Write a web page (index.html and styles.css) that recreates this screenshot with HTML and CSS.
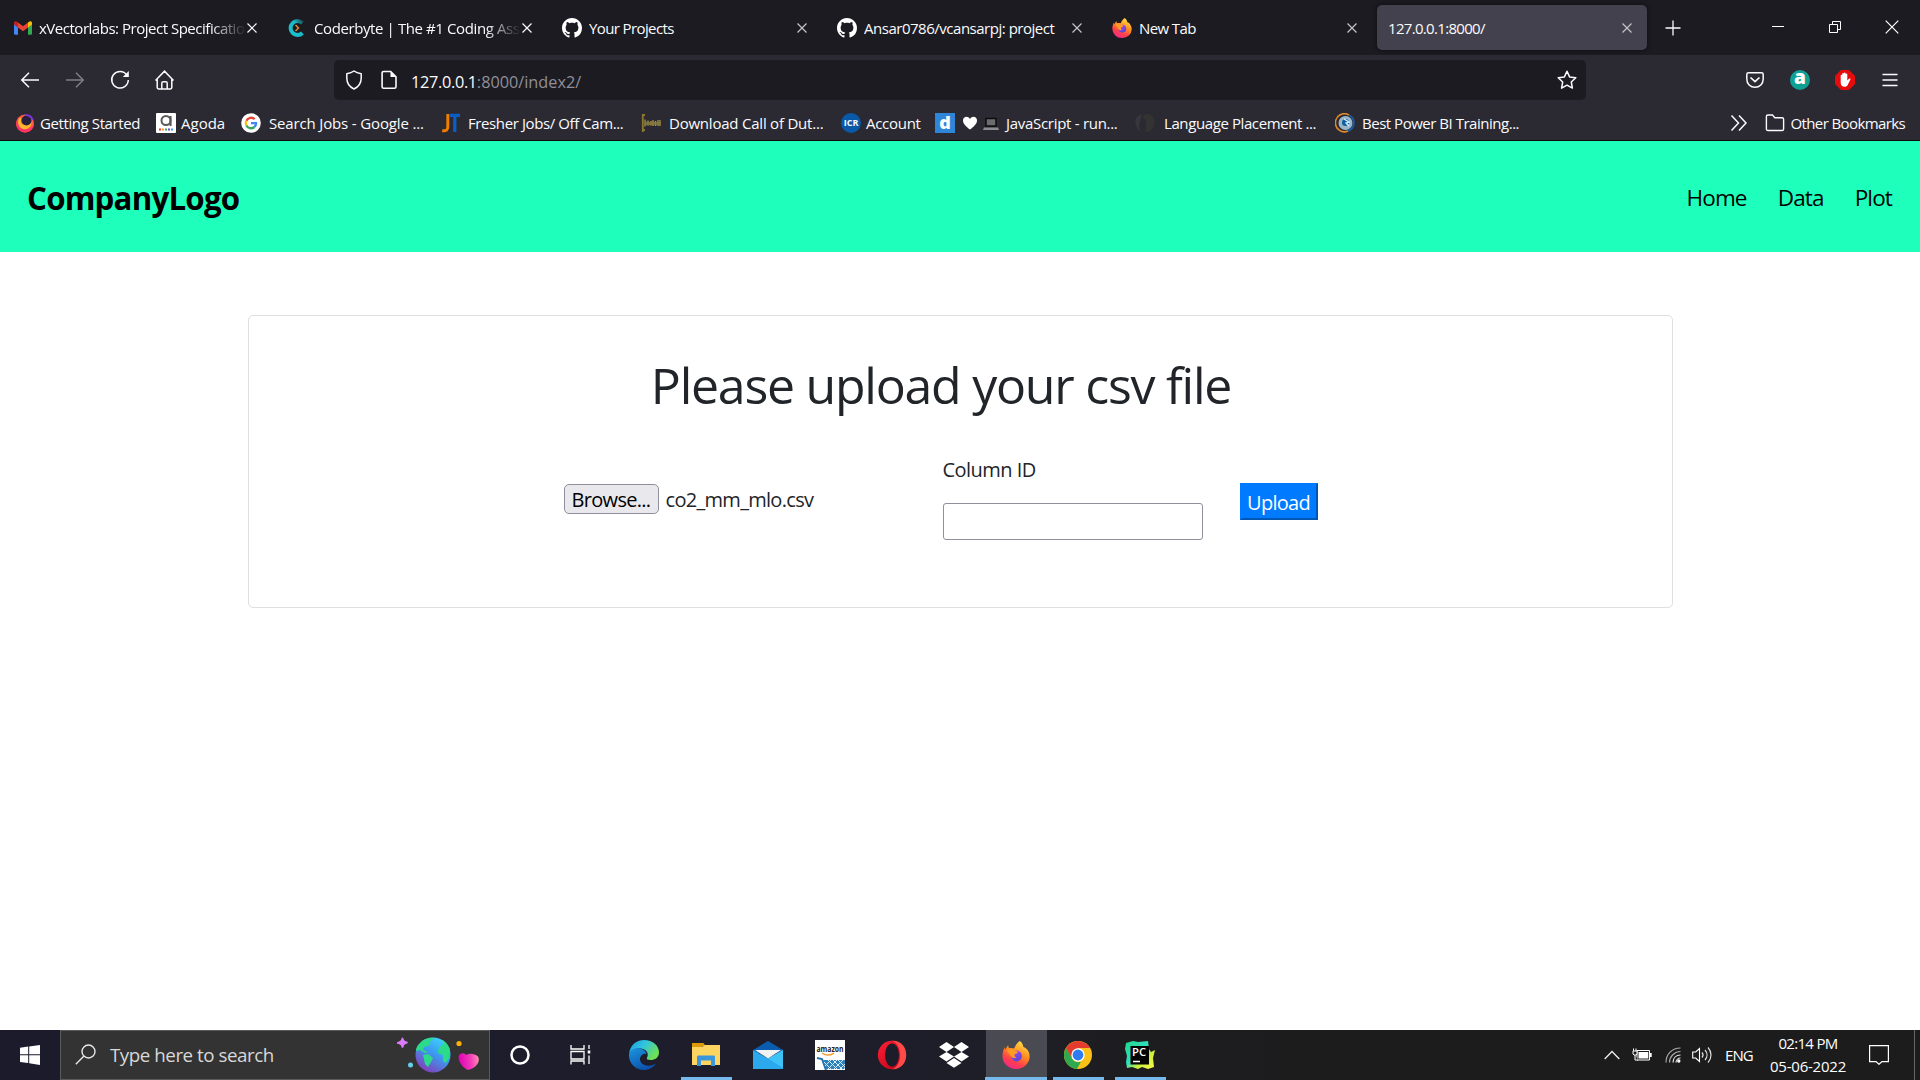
FILE: index.html
```html
<!DOCTYPE html>
<html lang="en">
<head>
<meta charset="utf-8">
<title>Upload CSV</title>
<link rel="stylesheet" href="styles.css">
</head>
<body>
<svg class="defs" width="0" height="0">
  <defs>
    <linearGradient id="fxBody" x1="0.8" y1="0" x2="0.3" y2="1"><stop offset="0" stop-color="#ffe94a"/><stop offset="0.45" stop-color="#ff8a1f"/><stop offset="0.75" stop-color="#ff3d4f"/><stop offset="1" stop-color="#f0288c"/></linearGradient>
    <linearGradient id="fxCore" x1="0" y1="0" x2="0.5" y2="1"><stop offset="0" stop-color="#b04bf0"/><stop offset="1" stop-color="#5b45d8"/></linearGradient>
    <linearGradient id="edgeA" x1="0" y1="0" x2="1" y2="0.5"><stop offset="0" stop-color="#1c9de0"/><stop offset="0.5" stop-color="#2fc4df"/><stop offset="1" stop-color="#6ee053"/></linearGradient>
    <linearGradient id="edgeB" x1="0" y1="0" x2="0.6" y2="1"><stop offset="0" stop-color="#1b96e0"/><stop offset="1" stop-color="#0c4fa8"/></linearGradient>
    <linearGradient id="opera" x1="0" y1="0" x2="1" y2="1"><stop offset="0" stop-color="#ff2038"/><stop offset="1" stop-color="#b50012"/></linearGradient>
    <linearGradient id="globe" x1="0.8" y1="0" x2="0.2" y2="1"><stop offset="0" stop-color="#3fd5ff"/><stop offset="0.45" stop-color="#3a9bf0"/><stop offset="1" stop-color="#8a35b5"/></linearGradient>
    <linearGradient id="heart" x1="0" y1="0.4" x2="1" y2="0.3"><stop offset="0" stop-color="#e000b4"/><stop offset="0.6" stop-color="#f23db8"/><stop offset="1" stop-color="#ff8fb0"/></linearGradient>
    <linearGradient id="pc" x1="0" y1="0" x2="1" y2="1"><stop offset="0" stop-color="#21d789"/><stop offset="0.45" stop-color="#2fe0c0"/><stop offset="0.65" stop-color="#c8f03a"/><stop offset="1" stop-color="#fcf84a"/></linearGradient>
    <linearGradient id="coder" x1="0" y1="1" x2="1" y2="0"><stop offset="0" stop-color="#17c5cf"/><stop offset="0.65" stop-color="#1cb7c2"/><stop offset="1" stop-color="#1b4a52"/></linearGradient>
    <symbol id="x" viewBox="0 0 12 12"><path d="M1.500 1.500l9 9M10.500 1.500l-9 9" fill="none" stroke="currentColor" stroke-width="1.200"/></symbol>
    <symbol id="firefox" viewBox="0 0 28 28">
      <path d="M17.800 0c2.500 1.700 3.300 4 3.600 6 1.800.500 3.200 1.700 3.800 2.600 1.700 2.200 2.400 4.400 2.400 7A13.300 12.400 0 0 1 14 28 13.300 12.600 0 0 1 .5 15.300c0-3.500.800-6.600 2.300-9 .200 1.100.600 1.900 1 2.300C4 7.200 5 5.200 6.200 4.200c0 1.300.300 2.300 1 2.800 1.700-.300 3.700 0 5 .500C13.200 4.800 15.500 1.500 17.800 0z" fill="url(#fxBody)"/>
      <circle cx="14.500" cy="15" r="5.400" fill="url(#fxCore)"/>
      <path d="M4.500 9.500c3-2 6.500-1.600 8.700.4 1.300 0 2.700.500 2.800 1.300-.500 1.300-3 1.300-3.500 2.600-.300 1.300.600 2.400 1.800 2.700-2.600 1.400-5.300 0-6-2.400z" fill="#ff9a22"/>
    </symbol>
    <symbol id="github" viewBox="0 0 16 16"><path fill="#fff" d="M8 0C3.580 0 0 3.580 0 8c0 3.540 2.290 6.530 5.470 7.590.4.070.550-.170.550-.380 0-.190-.010-.820-.010-1.490-2.010.370-2.530-.490-2.690-.940-.090-.230-.480-.940-.820-1.130-.280-.150-.680-.520-.010-.530.630-.010 1.080.580 1.230.820.720 1.210 1.870.870 2.330.660.070-.520.280-.870.510-1.070-1.780-.2-3.640-.890-3.640-3.950 0-.870.310-1.590.820-2.150-.080-.2-.360-1.020.080-2.120 0 0 .670-.210 2.200.820.640-.180 1.320-.270 2-.270s1.360.090 2 .270c1.530-1.040 2.200-.820 2.200-.820.440 1.100.160 1.920.080 2.120.510.560.820 1.270.820 2.150 0 3.070-1.870 3.750-3.650 3.950.290.250.540.730.540 1.480 0 1.070-.010 1.930-.010 2.200 0 .210.150.460.550.380A8.010 8.010 0 0 0 16 8c0-4.420-3.580-8-8-8z"/></symbol>
  </defs>
</svg>

<div class="tabstrip">
  <div class="tab">
    <svg class="favicon gmail" viewBox="0 0 20 20"><path d="M1 5v10.500c0 .800.500 1.200 1.200 1.200H5V8z" fill="#4285f4"/><path d="M15 8v8.700h2.800c.700 0 1.200-.400 1.200-1.200V5z" fill="#34a853"/><path d="M5 4.500V9.500l5 3.800 5-3.800V4.500l-5 3.800z" fill="#ea4335"/><path d="M1 5c0-1.800 1.800-2.300 3-1.300l1 .800v5L1 6.600z" fill="#c5221f"/><path d="M19 5c0-1.800-1.800-2.300-3-1.300l-1 .800v5l4-2.900z" fill="#fbbc04"/></svg>
    <span class="tab-title fade tight-5">xVectorlabs: Project Specification</span>
    <svg class="close"><use href="#x"/></svg>
  </div>
  <div class="tab">
    <svg class="favicon" viewBox="0 0 20 20"><path d="M15.500 5A7 7 0 1 0 15.500 15" fill="none" stroke="url(#coder)" stroke-width="4"/><path d="M8.500 7l3 3-3 3" fill="none" stroke="#d98b2b" stroke-width="1.500"/></svg>
    <span class="tab-title fade tight-4">Coderbyte | The #1 Coding Assessment</span>
    <svg class="close"><use href="#x"/></svg>
  </div>
  <div class="tab">
    <svg class="favicon"><use href="#github"/></svg>
    <span class="tab-title tight-6">Your Projects</span>
    <svg class="close dim"><use href="#x"/></svg>
  </div>
  <div class="tab">
    <svg class="favicon"><use href="#github"/></svg>
    <span class="tab-title tight-5">Ansar0786/vcansarpj: project</span>
    <svg class="close dim"><use href="#x"/></svg>
  </div>
  <div class="tab">
    <svg class="favicon"><use href="#firefox"/></svg>
    <span class="tab-title tight-6">New Tab</span>
    <svg class="close dim"><use href="#x"/></svg>
  </div>
  <div class="tab active">
    <span class="tab-title tight-7">127.0.0.1:8000/</span>
    <svg class="close dim"><use href="#x"/></svg>
  </div>
  <svg class="newtab" viewBox="0 0 16 16"><path d="M8 .5v15M.5 8h15" stroke="#fbfbfe" stroke-width="1.300"/></svg>
  <div class="window-controls">
    <svg viewBox="0 0 14 14"><path d="M1 6.500h12" stroke="#fff" stroke-width="1"/></svg>
    <svg viewBox="0 0 14 14"><path d="M1.500 4.500h8v8h-8zM4.500 4.500v-3h8v8h-3" fill="none" stroke="#fff"/></svg>
    <svg viewBox="0 0 14 14"><path d="M.7.700l12.600 12.600M13.300.7L.7 13.300" stroke="#fff" stroke-width="1.200"/></svg>
  </div>
</div>

<div class="navbar">
  <div class="nav-buttons">
    <svg viewBox="0 0 20 20"><path d="M19 10H2M9 2.800L1.800 10 9 17.200" fill="none" stroke="#fbfbfe" stroke-width="1.500"/></svg>
    <svg class="disabled" viewBox="0 0 20 20"><path d="M1 10h17M11 2.800l7.200 7.200-7.200 7.200" fill="none" stroke="#fbfbfe" stroke-width="1.500"/></svg>
    <svg viewBox="0 0 20 20"><path d="M16.800 5A8.300 8.300 0 1 0 18.300 10" fill="none" stroke="#fbfbfe" stroke-width="1.500"/><path d="M18.800 1v6h-6z" fill="#fbfbfe"/></svg>
    <svg viewBox="0 0 20 20"><path d="M.5 10.500L9.500 1.200l9 9.300M2.200 9v8.500c0 .900.500 1.400 1.400 1.400h11.800c.900 0 1.400-.500 1.400-1.400V9M6.800 18.500v-5.200c0-1 .500-1.600 1.500-1.600h2.400c1 0 1.500.600 1.500 1.600v5.200" fill="none" stroke="#fbfbfe" stroke-width="1.500"/></svg>
  </div>
  <div class="urlbar">
    <svg viewBox="0 0 20 20"><path d="M10 1C8 2.500 5 3.400 2.800 3.800V8c0 5 2.900 9 7.200 11 4.300-2 7.200-6 7.200-11V3.800C15 3.400 12 2.500 10 1z" fill="none" stroke="#fbfbfe" stroke-width="1.500" stroke-linejoin="round"/></svg>
    <svg class="page" viewBox="0 0 20 20"><path d="M4.700 1.500h7l5.300 5.300v9.900c0 1-.6 1.600-1.600 1.600H4.700c-1 0-1.600-.600-1.600-1.600V3.100c0-1 .600-1.600 1.600-1.600z" fill="none" stroke="#fbfbfe" stroke-width="1.600"/><path d="M11.500 1.500v5.500H17z" fill="#fbfbfe"/></svg>
    <span class="url"><span class="host">127.0.0.1</span>:8000/index2/</span>
    <svg class="star" viewBox="0 0 20 20"><path d="M10 1.300l2.600 5.600 6.200.800-4.500 4.300 1.100 6.100L10 15.200l-5.400 2.900L5.700 12 1.200 7.700l6.200-.800z" fill="none" stroke="#fbfbfe" stroke-width="1.500" stroke-linejoin="round"/></svg>
  </div>
  <div class="nav-tools">
    <svg viewBox="0 0 20 20"><path d="M3.500 2.700h13c1 0 1.700.700 1.700 1.700V9c0 4.900-3.600 8.300-8.200 8.300S1.800 13.900 1.800 9V4.400c0-1 .7-1.700 1.700-1.700z" fill="none" stroke="#fbfbfe" stroke-width="1.500"/><path d="M5.500 7.500L10 11.700l4.500-4.200" fill="none" stroke="#fbfbfe" stroke-width="1.700"/></svg>
    <span class="badge-a">a</span>
    <svg viewBox="0 0 20 20"><path d="M6 0h8l6 6v8l-6 6H6l-6-6V6z" fill="#e60c0c"/><path d="M5.700 11V5.600c0-1 1.500-1 1.500 0v3-4.900c0-1.100 1.700-1.100 1.700 0V3.200c0-1.100 1.700-1.100 1.700 0v1c0-1.100 1.700-1.100 1.700 0v6.300l1.700-1.800c.800-.700 1.900 0 1.400.900l-2.700 5.400c-.600 1.200-1.500 1.800-2.900 1.800-2.700 0-4.100-1.800-4.100-4.400z" fill="#fff"/></svg>
    <svg viewBox="0 0 20 20"><path d="M2.500 4.500h15M2.500 10h15M2.500 15.500h15" stroke="#fbfbfe" stroke-width="1.500"/></svg>
  </div>
</div>

<div class="bookmarks">
  <div class="bm b1"><svg viewBox="0 0 20 20"><circle cx="10" cy="10.500" r="9" fill="#ff5b45"/><path d="M1 9c0 6 4 10.500 9 10.500s9-4 9-9c-1 3-4 5.500-8 5.500S3 13 4 6z" fill="#ff3366"/><path d="M5 4.500c-3 3-2.500 8 1 10.500 4 2.500 8.500.8 10-3 .8-2 .500-4-.5-5.500 0 3-2 5.500-5 5.500-3.500 0-5.500-3-4-6z" fill="#ffb62e"/><circle cx="11.500" cy="7.500" r="5" fill="#28203c"/><path d="M9 1.500c5-1.500 10 2 10 8-1-2.500-3-5-6-6z" fill="#7b35e8"/></svg><span class="tight-4">Getting Started</span></div>
  <div class="bm b2"><svg viewBox="0 0 20 20"><rect width="20" height="20" rx="1" fill="#fff"/><circle cx="10" cy="7.500" r="4.500" fill="none" stroke="#5a5a5a" stroke-width="2"/><path d="M14.600 3v10" stroke="#5a5a5a" stroke-width="2"/><g stroke-width="1.800"><path d="M3 16.500h2" stroke="#e33"/><path d="M6 16.500h2" stroke="#f7a01b"/><path d="M9 16.500h2" stroke="#3aa757"/><path d="M12 16.500h2" stroke="#7b44c9"/><path d="M15 16.500h2" stroke="#3a9be8"/></g></svg><span>Agoda</span></div>
  <div class="bm b3"><svg viewBox="0 0 20 20"><circle cx="10" cy="10" r="9.800" fill="#fff"/><g fill="none" stroke-width="2.300"><path d="M13.700 6.200A5.200 5.200 0 0 0 5.400 7.700" stroke="#ea4335"/><path d="M5.400 7.700a5.200 5.200 0 0 0 0 4.700" stroke="#fbbc05"/><path d="M5.400 12.400a5.200 5.200 0 0 0 8 1.600" stroke="#34a853"/><path d="M13.400 14A5 5 0 0 0 15.100 10.200H10" stroke="#4285f4"/></g></svg><span class="tight-1">Search Jobs - Google ...</span></div>
  <div class="bm b4"><svg viewBox="0 0 20 20"><path d="M6.800 1v12.500c0 3.500-1.500 4.700-5.600 4.200" fill="none" stroke="#f07c00" stroke-width="3"/><path d="M8.500 2.300H19M13.800 2v17" stroke="#0a5fc4" stroke-width="3.200"/></svg><span class="tight-4">Fresher Jobs/ Off Cam...</span></div>
  <div class="bm b5"><svg viewBox="0 0 20 20"><path d="M1.800 1v18M1 2h3M1 17h3" stroke="#8c7a2c" stroke-width="1.800"/><path d="M4 6.500v7M7 7.500v5M10 8v4.500M12 7v6M14.500 8v5M17 7v6M19 7v6" stroke="#b09a4c" stroke-width="1.200"/><path d="M4 10.500h15.500" stroke="#8a7a3c" stroke-width="3.500" opacity=".8"/></svg><span class="tight-2">Download Call of Dut...</span></div>
  <div class="bm b6"><i class="icr">ICR</i><span class="tight-3">Account</span></div>
  <div class="bm b7"><i class="dee">d</i><svg class="mini" viewBox="0 0 16 16"><path d="M8 14.500C4 11.500 1 8.800 1 5.500 1 1.500 6 .5 8 4c2-3.500 7-2.500 7 1.500 0 3.300-3 6-7 9z" fill="#fff"/></svg><svg class="laptop" viewBox="0 0 18 16"><path d="M4 3.500h10v7.500H4z" fill="#6c6c70" stroke="#0c0c0e" stroke-width="1.500"/><path d="M2 12.500h14l1 2.500H1z" fill="#8c8c90"/></svg><span class="tight-3">JavaScript - run...</span></div>
  <div class="bm b8"><svg viewBox="0 0 20 20"><path d="M7 1C2 2 0 6 .5 10.500 1 14 3 17 5 18c-1-4-1-7 .5-11z" fill="#36363c"/><path d="M9 2c6-3 11 2 10.500 8.500C19 16 15 19.500 10 19c2-5 0-9 1-12C8 6 7 4 9 2z" fill="#333331"/></svg><span class="tight-4">Language Placement ...</span></div>
  <div class="bm b9"><svg viewBox="0 0 20 20"><circle cx="10.500" cy="10" r="7" fill="#9bb6c8"/><path d="M14 2A9 9 0 1 0 13 18" fill="none" stroke="#e08a28" stroke-width="1.600"/><path d="M14 2c7 4 6 13-1 16" fill="none" stroke="#1d5b9c" stroke-width="2"/><circle cx="10.500" cy="9.500" r="3.500" fill="#0e5f9e"/><path d="M9 6l5 3-3 1 3 3" fill="none" stroke="#dff3ff" stroke-width="1.300"/></svg><span class="tight-5">Best Power BI Training...</span></div>
  <svg class="more" viewBox="0 0 20 20"><path d="M2.500 2.500L9.500 10l-7 7.500M10 2.500l7 7.500-7 7.500" fill="none" stroke="#fbfbfe" stroke-width="1.500"/></svg>
  <div class="bm other"><svg viewBox="0 0 20 20"><path d="M3 2h4.500l2.300 2.700H17c1 0 1.600.6 1.600 1.600v9.600c0 1-.6 1.600-1.600 1.600H3c-1 0-1.600-.6-1.600-1.600V3.600C1.400 2.600 2 2 3 2z" fill="none" stroke="#fbfbfe" stroke-width="1.400"/></svg><span class="tight-6">Other Bookmarks</span></div>
</div>

<main class="page-body">
  <header class="site-header">
    <div class="logo">CompanyLogo</div>
    <nav><a>Home</a><a>Data</a><a>Plot</a></nav>
  </header>
  <section class="card">
    <h1>Please upload your csv file</h1>
    <form class="upload-form">
      <div class="file-input"><span class="browse">Browse...</span><span class="filename">co2_mm_mlo.csv</span></div>
      <label class="column-id"><span>Column ID</span><input type="text"></label>
      <button type="button" class="upload">Upload</button>
    </form>
  </section>
</main>

<footer class="taskbar">
  <div class="start"><svg viewBox="0 0 20 20"><path d="M0 2.800l8.200-1.200v7.700H0zM9.200 1.500L20 0v9.300H9.200zM0 10.300h8.200V18L0 16.900zM9.200 10.300H20V20L9.200 18.200z" fill="#fff"/></svg></div>
  <div class="search">
    <svg class="lens" viewBox="0 0 21 21"><circle cx="13.500" cy="7.500" r="6.500" fill="none" stroke="#e8e8e8" stroke-width="1.400"/><path d="M9 12L.8 20.200" stroke="#e8e8e8" stroke-width="1.400"/></svg>
    <span>Type here to search</span>
    <svg class="art" viewBox="0 0 84 38">
      <path d="M5.500 2c.7 3 1.500 3.700 5 4.500-3.500 1-4.300 2-5 5-.7-3-1.500-3.700-5-4.500 3.500-1.300 4.300-2 5-5z" fill="#dd7bff" stroke="#dd7bff" stroke-width="1.500"/>
      <circle cx="13.500" cy="29" r="2.500" fill="#63cfe8"/><circle cx="62" cy="7.500" r="2.600" fill="#ffb000"/>
      <g transform="translate(0 1)">
        <circle cx="36" cy="18" r="17.500" fill="url(#globe)"/>
        <path d="M22 7C26 2 32 0 37 1l-3 3-3 1 3 1-3 3-4 1-1 3 5 2-3 1-5-3-4 1c0-3 1-5 3-7zM26 18l5-1 5 4-2 4-3 5-3-3-1-5zM42 10l5-3-2-4c3 1 7 5 8 10l-1 8-3 5-3-2v-6l-5-2z" fill="#2cdb8a"/>
        <path d="M70.500 33c-5-3-9-8-9-13 .5-4 5-5 8-2 2.500-2 8-1.500 11.500 1.500 3 5-2 12-10.500 13.500z" fill="url(#heart)"/>
      </g>
    </svg>
  </div>
  <div class="apps">
    <div class="app"><svg viewBox="0 0 30 30"><circle cx="15" cy="15" r="8.500" fill="none" stroke="#fff" stroke-width="2.500"/></svg></div>
    <div class="app"><svg viewBox="0 0 30 30"><path d="M4 5v4h13V5M4 11.500h13v7.500H4zM4 24.500v-3.500h13v3.500M22 5v4M22 15.500v8.500" fill="none" stroke="#fff" stroke-width="1.300"/><path d="M20.700 10.500h2.600v3h-2.600z" fill="#fff"/></svg></div>
    <div class="app"><svg viewBox="0 0 30 30"><path d="M0 14C1 5.500 7 0 15 0c9 0 15 5.800 15 12.500 0 5-4 7.500-8.500 7.500-2.800 0-4.300-1-3.500-2.300 2-3.400 0-8.700-6-9.200C6 8 1.500 10.500 0 14z" fill="url(#edgeA)"/><path d="M0 14.500C1 9.500 6 7.500 10.500 8.500c4.500.8 6.500 3 7 5.500-2-1-6 .5-6.500 4.500-.5 5.500 6.500 10 16 5C24 28 19.500 30 15 30 6.500 30-.5 23 0 14.500z" fill="url(#edgeB)"/></svg></div>
    <div class="app open"><svg viewBox="0 0 30 30"><path d="M1 3h11.500l2 3h-3v4H1z" fill="#dd9b08"/><path d="M1 7h10l3-2h15V25H1z" fill="#ffd562"/><path d="M6 26V17c0-1 .5-1.500 1.500-1.500h15c1 0 1.500.5 1.500 1.500v9h-4v-5.500H10V26z" fill="#3a96dd"/></svg></div>
    <div class="app"><svg viewBox="0 0 30 30"><path d="M0 10L15 1l15 9v3H0z" fill="#0a5cae"/><path d="M0 10l15 8.500L30 10v19H0z" fill="#2ba9ec"/><path d="M30 10L15 18.500 30 28z" fill="#3fc3f6"/><path d="M2 10h26L15 18.500z" fill="#f0f2f4"/></svg></div>
    <div class="app"><svg viewBox="0 0 30 30"><rect width="30" height="30" fill="#fff"/><text x="1.500" y="11.500" font-size="8" font-weight="700" textLength="27" lengthAdjust="spacingAndGlyphs" fill="#222">amazon</text><path d="M7 13c4 3 9 2.500 12 0" fill="none" stroke="#f49a2c" stroke-width="1.500"/><path d="M2 18l5 1 4 11" fill="none" stroke="#2473ae" stroke-width="2"/><path d="M8 20h22v7l-1 2H11z" fill="#2e80b8"/><path d="M9 22l8 8M13 20l10 10M18 20l10 10M23 20l7 7M12 30l10-10M18 30l10-10M24 30l6-6M10 26l6-6" stroke="#d5eafa" stroke-width="1"/></svg></div>
    <div class="app"><svg viewBox="0 0 30 30"><ellipse cx="15" cy="15" rx="14.200" ry="14.300" fill="url(#opera)"/><path d="M15 .800c9-.500 14.200 6.200 14.200 14.200S24 29.500 15 29.200c4-.7 8-6.200 8-14.200S19 1.800 15 .800z" fill="#ff4a4a"/><ellipse cx="15" cy="15" rx="7" ry="11.500" fill="#1d1d2a"/></svg></div>
    <div class="app"><svg viewBox="0 0 30 30"><path d="M7.500 2l7.500 5-7.500 5L0 7zM22.500 2L30 7l-7.500 5L15 7zM7.500 12l7.500 4.500-7.500 5L0 16.500zM22.500 12l7.500 4.500-7.500 5-7.500-5zM7.500 23l7.500-5 7.500 5-7.500 4.800z" fill="#fff"/></svg></div>
    <div class="app open current"><svg viewBox="0 0 30 30"><use href="#firefox" x="1" y="1" width="28" height="28"/></svg></div>
    <div class="app open"><svg viewBox="0 0 30 30"><circle cx="15" cy="15" r="14" fill="#fbc116"/><path d="M2.900 8A14 14 0 0 1 27.100 8H15l-6 10.500z" fill="#e33b2e"/><path d="M2.900 8l6.100 10.500A7 7 0 0 0 18 21.500L14 29A14 14 0 0 1 2.900 8z" fill="#2da94f"/><circle cx="15" cy="15" r="6.700" fill="#fff"/><circle cx="15" cy="15" r="5.400" fill="#2f7cf0"/></svg></div>
    <div class="app open"><svg viewBox="0 0 30 30"><path d="M1 3l7-2 5 1 10-1 1 8 2 3 4-2-2 8 1 9-6 2-6-2-4 2-6-2-5 1-1-6 1-6-2-7z" fill="url(#pc)"/><rect x="5.500" y="6" width="18.500" height="18.500" fill="#050505"/><text x="7" y="15.500" font-size="10.500" font-weight="600" textLength="14" lengthAdjust="spacingAndGlyphs" fill="#fff">PC</text><path d="M8 21.500h7" stroke="#fff" stroke-width="1.500"/></svg></div>
  </div>
  <div class="tray">
    <svg class="chevron" viewBox="0 0 16 10"><path d="M.7 9L8 1.500 15.300 9" fill="none" stroke="#eee" stroke-width="1.300"/></svg>
    <svg class="battery" viewBox="0 0 20 14"><path d="M5 2.500h12.500v9.500H5z" fill="none" stroke="#fff"/><path d="M6.500 4h9.800v6.500H6.500zM18 5h1.700v4H18z" fill="#fff"/><path d="M1 3h4v3L4 7H2L1 6zM1.500.5V3M4 .5V3M3 7v5h3" fill="#1d1d1d" stroke="#fff"/></svg>
    <svg class="wifi" viewBox="0 0 16 16"><g fill="none" stroke="#aaa" stroke-width="1.200"><path d="M1 15.500C1 7 7 1 15.500 1M4.500 15.500c0-6 5-11 11-11"/><path d="M8 15.500C8 11 11 8 15.500 8M11 15.500c0-2.500 2-4.500 4.500-4.500" stroke="#e5e5e5"/></g><circle cx="13.800" cy="14" r="1.700" fill="#fff"/></svg>
    <svg class="sound" viewBox="0 0 20 18"><path d="M.7 6h3L7.500 2.500v13L3.700 12h-3z" fill="none" stroke="#fff" stroke-width="1.100"/><path d="M10 6.500c1.300 1.500 1.300 3.500 0 5M13 4c2.700 3 2.700 7 0 10M16 1.500c4 4.500 4 10.500 0 15" fill="none" stroke="#ddd" stroke-width="1.200"/></svg>
    <span class="lang">ENG</span>
    <div class="clock"><span class="tight-7">02:14 PM</span><span class="tight-2">05-06-2022</span></div>
    <svg class="notif" viewBox="0 0 20 20"><path d="M.6.600h18.800v16H13L10 19.300 7 16.600H.6z" fill="none" stroke="#fff" stroke-width="1.200"/></svg>
    <div class="peek"></div>
  </div>
</footer>
</body>
</html>
```
FILE: styles.css
```css
* { box-sizing: border-box; }
body {
  margin: 0;
  width: 1920px;
  height: 1080px;
  overflow: hidden;
  display: flex;
  flex-direction: column;
  background: #fff;
  font-family: "Open Sans", "Noto Sans", sans-serif;
}
svg { display: block; flex: none; }
.defs { position: absolute; }
.tight-1 { letter-spacing: -.15px; }
.tight-2 { letter-spacing: -.22px; }
.tight-3 { letter-spacing: -.29px; }
.tight-4 { letter-spacing: -.4px; }
.tight-5 { letter-spacing: -.48px; }
.tight-6 { letter-spacing: -.61px; }
.tight-7 { letter-spacing: -.68px; }

/* tab strip */
.tabstrip {
  height: 55px;
  flex: none;
  display: flex;
  align-items: flex-start;
  gap: 5px;
  padding: 5px 0 0 2px;
  background: #1c1b22;
  color: #fbfbfe;
  font-size: 15px;
}
.tab {
  width: 270px;
  height: 45px;
  display: flex;
  align-items: center;
  padding: 1px 14px 0 11px;
  border-radius: 5px;
}
.tab.active { background: #42414d; box-shadow: 0 0 5px rgba(0, 0, 0, .6); }
.favicon { width: 20px; height: 20px; margin: 0 7px 0 -1px; }
.favicon.gmail { margin: 0 6px 0 0; }
.tab-title { flex: 1; min-width: 0; overflow: hidden; white-space: nowrap; }
.fade { -webkit-mask-image: linear-gradient(to left, transparent, #000 36px); mask-image: linear-gradient(to left, transparent, #000 36px); }
.close { width: 12px; height: 12px; color: #fbfbfe; }
.close.dim { color: #c4c4cb; }
.newtab { width: 16px; height: 16px; margin: 15px 0 0 13px; }
.window-controls { display: flex; gap: 43px; margin: 15px 21px 0 auto; }
.window-controls svg { width: 14px; height: 14px; }

/* navigation bar */
.navbar {
  height: 55px;
  flex: none;
  display: flex;
  align-items: center;
  padding: 0 20px 5px;
  background: #2b2a33;
}
.nav-buttons { display: flex; gap: 25px; width: 314px; }
.nav-buttons svg, .nav-tools svg { width: 20px; height: 20px; }
.disabled { opacity: .4; }
.urlbar {
  width: 1252px;
  height: 40px;
  display: flex;
  align-items: center;
  padding: 0 9px 0 10px;
  border-radius: 5px;
  background: #1c1b22;
}
.urlbar svg { width: 20px; height: 20px; }
.urlbar .page { margin-left: 15px; margin-right: 12px; }
.url { flex: 1; padding-top: 4px; font-size: 16.25px; color: #8f8f98; }
.host { color: #fbfbfe; letter-spacing: -.3px; }
.nav-tools { display: flex; gap: 25px; margin-left: auto; }
.badge-a {
  width: 20px;
  height: 20px;
  border-radius: 50%;
  background: #0f9f93;
  color: #fff;
  font-size: 19px;
  font-weight: 800;
  line-height: 15px;
  text-align: center;
}

/* bookmarks toolbar */
.bookmarks {
  height: 31px;
  flex: none;
  display: flex;
  align-items: center;
  padding: 0 15px 4px 15px;
  background: #2b2a33;
  border-bottom: 1px solid #0c0c0d;
  color: #fbfbfe;
  font-size: 15px;
  white-space: nowrap;
}
.bm { display: flex; align-items: center; }
.bm > svg, .bm > i { width: 20px; height: 20px; margin-right: 5px; }
.b1 { width: 141px; }
.b2 { width: 85px; }
.b3 { width: 200px; }
.b3 > svg { margin-right: 8px; }
.b4 { width: 200px; }
.b4 > svg { margin-right: 7px; }
.b5 { width: 200px; }
.b5 > svg { margin-right: 8px; }
.b6 { width: 94px; }
.b7 { width: 200px; }
.b8 { width: 200px; }
.b8 > svg { margin-right: 9px; }
.b9 > svg { margin-right: 7px; }
.icr {
  border-radius: 50%;
  background: #0a58a8;
  font-size: 9px;
  font-weight: 700;
  font-style: normal;
  line-height: 20px;
  text-align: center;
}
.dee {
  background: #2f86d8;
  font-size: 18px;
  font-weight: 800;
  font-style: normal;
  line-height: 19px;
  text-align: center;
}
.bm > .mini { width: 16px; height: 16px; margin: 0 4px 0 2px; }
.bm > .laptop { width: 18px; height: 16px; margin-right: 6px; }
.more { width: 20px; height: 20px; margin-left: auto; }
.other { margin-left: 16px; }

/* web page */
.page-body { flex: 1; min-height: 0; }
.site-header {
  height: 111px;
  display: flex;
  align-items: center;
  justify-content: space-between;
  padding: 2px 28px 0 27px;
  background: #1fffbc;
  color: #000;
}
.logo { padding-top: 1px; font-size: 31.25px; font-weight: 700; letter-spacing: -.78px; }
.site-header nav { display: flex; gap: 31px; font-size: 22.5px; letter-spacing: -.85px; }
.card {
  width: 1425px;
  height: 293px;
  margin: 63px auto 0;
  padding: 34px 38px 0 0;
  display: flex;
  flex-direction: column;
  align-items: center;
  border: 1px solid #dfdfdf;
  border-radius: 5px;
  color: #212529;
  font-size: 20px;
}
.card h1 { margin: 0 0 36px; font-size: 50px; font-weight: 400; line-height: 70px; letter-spacing: -1.24px; }
.upload-form { display: flex; align-items: flex-start; width: 755px; }
.file-input { display: flex; align-items: center; width: 379px; margin-top: 28px; height: 30px; gap: 7px; letter-spacing: -.7px; }
.browse {
  width: 95px;
  height: 30px;
  line-height: 29px;
  border: 1px solid #8f8f9d;
  border-radius: 5px;
  background: #e9e9ed;
  color: #000;
  text-align: center;
}
.column-id { display: flex; flex-direction: column; width: 260px; line-height: 28px; letter-spacing: -.52px; }
.column-id input { width: 260px; height: 37px; margin-top: 19px; border: 1px solid #8f8f9d; border-radius: 3px; background: #fff; }
.upload {
  width: 78px;
  height: 37px;
  margin: 27px 0 0 37px;
  padding: 2px 0 0;
  border: 2px solid;
  border-color: #007bff #0056b3 #0056b3 #007bff;
  background: #007bff;
  color: #fff;
  font: inherit;
  letter-spacing: -.72px;
}

/* taskbar */
.taskbar {
  height: 50px;
  flex: none;
  display: flex;
  background: linear-gradient(to right, #1b1b2b 0, #1e1e2b 900px, #1d1d1f 1150px, #1c1c1c 1500px);
  color: #fff;
}
.start { width: 60px; display: flex; align-items: center; justify-content: center; }
.start svg { width: 20px; height: 20px; }
.search {
  width: 430px;
  display: flex;
  align-items: center;
  padding: 0 8px 1px 14px;
  border: 1px solid #5a5a5a;
  background: #333;
  color: #d8d8d8;
  font-size: 18.75px;
  letter-spacing: -.46px;
}
.lens { width: 21px; height: 21px; margin-right: 14px; }
.art { width: 84px; height: 38px; margin-left: auto; }
.apps { display: flex; margin-left: -1px; }
.app { width: 62px; display: flex; align-items: center; justify-content: center; position: relative; }
.app svg { width: 30px; height: 30px; }
.app.open::after {
  content: "";
  position: absolute;
  left: 5.500px;
  right: 5.500px;
  bottom: 0;
  height: 3px;
  background: #76b9ed;
}
.app.current { background: linear-gradient(#4a4a52, #4a4a52) 50% / 61px 100% no-repeat; }
.app.current::after { left: 0; right: 0; }
.tray { margin-left: auto; display: flex; align-items: center; font-size: 15px; white-space: nowrap; }
.chevron { width: 16px; height: 10px; margin-right: 12px; }
.battery { width: 20px; height: 14px; margin-right: 13px; }
.wifi { width: 16px; height: 16px; margin-right: 11px; }
.sound { width: 20px; height: 18px; margin-right: 13px; }
.lang { width: 45px; letter-spacing: -.9px; }
.clock { width: 76px; display: flex; flex-direction: column; align-items: center; line-height: 23px; }
.notif { width: 20px; height: 20px; margin-left: 23px; }
.peek { width: 6px; height: 50px; margin-left: 25px; border-left: 1px solid #666; }
```
